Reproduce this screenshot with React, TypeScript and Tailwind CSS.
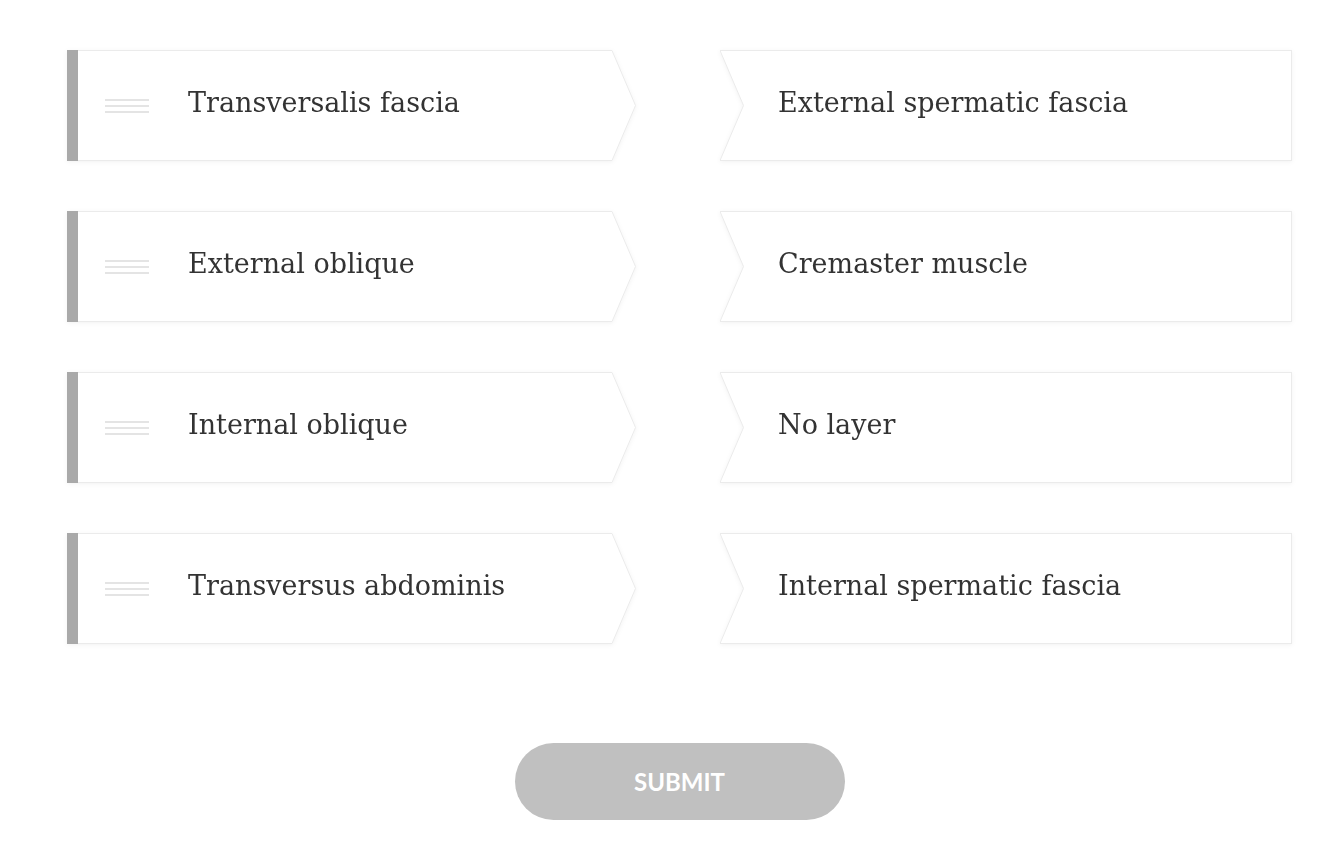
import React from "react"

const rows = [
  { left: "Transversalis fascia", right: "External spermatic fascia" },
  { left: "External oblique", right: "Cremaster muscle" },
  { left: "Internal oblique", right: "No layer" },
  { left: "Transversus abdominis", right: "Internal spermatic fascia" },
]

const serif = "font-['DejaVu_Serif',serif]"

function DragHandle() {
  return (
    <div className="flex w-[44px] flex-col gap-[4px]">
      <span className="h-[2px] bg-[#e4e4e4]" />
      <span className="h-[2px] bg-[#e4e4e4]" />
      <span className="h-[2px] bg-[#e4e4e4]" />
    </div>
  )
}

function SourceCard({ label }: { label: string }) {
  return (
    <div className="flex h-[111px] drop-shadow-[0_1px_2px_rgba(0,0,0,0.05)]">
      <div className="w-[11px] bg-[#a9a9a9]" />
      <div className="flex flex-1 items-center border-y border-[#ebebeb] bg-white pl-[27px]">
        <DragHandle />
        <span className={`ml-[39px] pb-[5px] text-[27px] text-[#333] ${serif}`}>{label}</span>
      </div>
      <svg width="24" height="111" viewBox="0 0 24 111" className="shrink-0">
        <polygon points="0,0.5 23.5,55.5 0,110.5" fill="#fff" />
        <polyline points="0,0.5 23.5,55.5 0,110.5" fill="none" stroke="#ebebeb" strokeWidth="1" />
      </svg>
    </div>
  )
}

function TargetCard({ label }: { label: string }) {
  return (
    <div className="flex h-[111px] drop-shadow-[0_1px_2px_rgba(0,0,0,0.05)]">
      <svg width="24" height="111" viewBox="0 0 24 111" className="shrink-0">
        <polygon points="0,0.5 24,0.5 24,110.5 0,110.5 23.5,55.5" fill="#fff" />
        <polyline points="24,0.5 0,0.5 23.5,55.5 0,110.5 24,110.5" fill="none" stroke="#ebebeb" strokeWidth="1" />
      </svg>
      <div className="flex flex-1 items-center border-y border-r border-[#ebebeb] bg-white pl-[34px]">
        <span className={`pb-[5px] text-[27px] text-[#333] ${serif}`}>{label}</span>
      </div>
    </div>
  )
}

export default function App() {
  return (
    <div className="min-h-[866px] bg-white pt-[50px]">
      <div className="ml-[67px] w-[1225px]">
        <div className="grid grid-cols-[569px_572px] gap-x-[84px] gap-y-[50px]">
          {rows.map((r) => (
            <React.Fragment key={r.left}>
              <SourceCard label={r.left} />
              <TargetCard label={r.right} />
            </React.Fragment>
          ))}
        </div>
        <div className="mt-[99px] flex justify-center">
          <button className="h-[77px] w-[330px] rounded-full bg-[#c0c0c0] font-['Lato',sans-serif] text-[24px] font-bold text-white">
            SUBMIT
          </button>
        </div>
      </div>
    </div>
  )
}
